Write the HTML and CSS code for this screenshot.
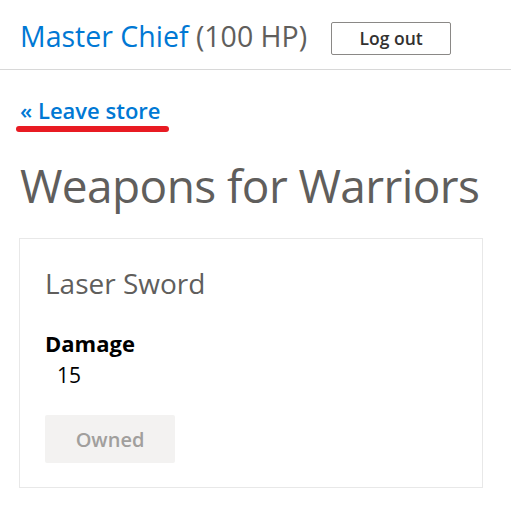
FILE: index.html
```html
<!DOCTYPE html>
<html>
<head>
<meta charset="utf-8">
<link rel="stylesheet" href="styles.css">
</head>
<body>
<header class="topbar">
  <div class="user"><span class="name">Master Chief</span> <span class="hp">(100 HP)</span></div>
  <button class="logout">Log out</button>
</header>
<main class="content">
  <a class="leave" href="#">« Leave store</a>
  <div class="mark"></div>
  <h1 class="title">Weapons for Warriors</h1>
  <section class="card">
    <h2 class="card-title">Laser Sword</h2>
    <dl class="stats">
      <dt>Damage</dt>
      <dd>15</dd>
    </dl>
    <button class="owned" disabled>Owned</button>
  </section>
</main>
</body>
</html>
```
FILE: styles.css
```css
* { box-sizing: border-box; }
body {
  margin: 0;
  font-family: "Open Sans", "Noto Sans", sans-serif;
  background: #fff;
}
.topbar {
  display: flex;
  align-items: center;
  height: 70px;
  padding: 8px 20px 0;
  border-bottom: 1px solid #d8d8d8;
  gap: 24px;
}
.user {
  font-size: 28.5px;
  line-height: 1;
  margin-top: -4px;
  white-space: nowrap;
}
.name { color: #0078d4; }
.hp { color: #605e5c; }
.logout {
  margin-top: -1px;
  width: 120px;
  height: 33px;
  background: #fff;
  border: 1px solid #8a8886;
  border-radius: 2px;
  font-family: inherit;
  font-weight: 600;
  font-size: 17.5px;
  color: #323130;
  padding: 0;
}
.content {
  padding: 0 20px;
}
.leave {
  display: inline-block;
  margin-top: 26px;
  font-size: 22px;
  font-weight: 600;
  color: #0078d4;
  text-decoration: none;
  line-height: 28px;
}
.mark {
  width: 153px;
  height: 6px;
  margin-left: -4px;
  margin-top: 2px;
  background: #e81b23;
  border-radius: 3px;
}
.title {
  margin: 25px 0 0;
  font-size: 46px;
  font-weight: 400;
  color: #605e5c;
  line-height: 56px;
  letter-spacing: -0.6px;
  white-space: nowrap;
}
.card {
  margin-top: 25px;
  width: 464px;
  margin-left: -1px;
  border: 1px solid #e8e8e8;
  padding: 24px 25px 24px;
}
.card-title {
  margin: 0;
  font-size: 28px;
  font-weight: 400;
  color: #605e5c;
  line-height: 40px;
}
.stats { margin: 25px 0 0; }
.stats dt {
  font-weight: 700;
  font-size: 22px;
  color: #000;
  line-height: 30px;
}
.stats dd {
  margin: 2px 0 0 12px;
  font-size: 21px;
  color: #000;
  line-height: 30px;
}
.owned {
  margin-top: 25px;
  width: 130px;
  height: 48px;
  background: #f3f2f1;
  border: none;
  border-radius: 2px;
  font-family: inherit;
  font-weight: 600;
  font-size: 20px;
  color: #a19f9d;
  padding: 0;
}
```
